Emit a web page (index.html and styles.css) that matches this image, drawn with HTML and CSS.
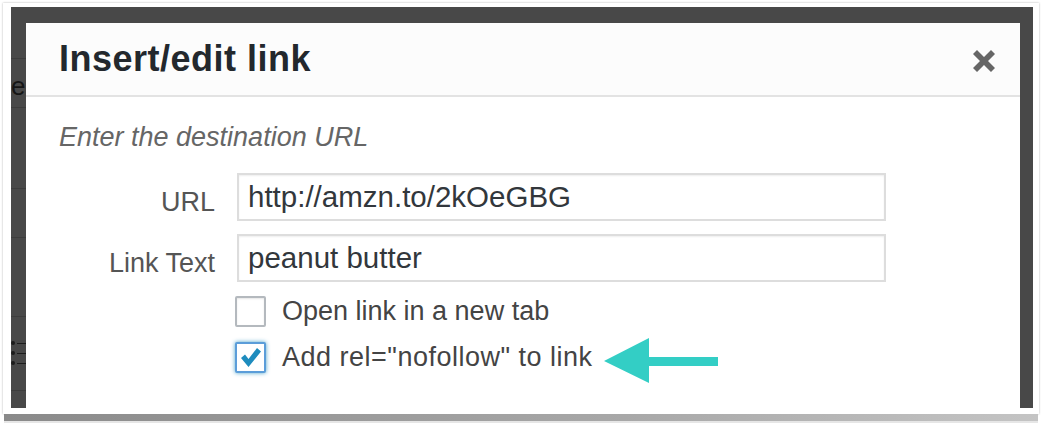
FILE: index.html
```html
<!DOCTYPE html>
<html lang="en">
<head>
  <meta charset="UTF-8" />
  <title>Insert/edit link</title>
  <link rel="stylesheet" href="styles.css">
</head>
<body>

  <div class="frame">
    <div class="screen">
      <!-- bits of the page behind the overlay -->
      <div class="under">
        <span class="rule" style="top:51px"></span>
        <span class="rule" style="top:100px"></span>
        <span class="rule" style="top:181px"></span>
        <span class="rule" style="top:230px"></span>
        <span class="rule" style="top:309px"></span>
        <span class="rule" style="top:383px"></span>
        <span class="under-letter">e</span>
        <span class="under-list">
          <i></i><i></i><i></i>
        </span>
      </div>

      <div class="dialog">
        <div class="dialog-head">
          <h1>Insert/edit link</h1>
          <button class="close" aria-label="Close">
            <svg width="22" height="22" viewBox="0 0 22 22">
              <path d="M4 0 L11 7 L18 0 L22 4 L15 11 L22 18 L18 22 L11 15 L4 22 L0 18 L7 11 L0 4 Z" fill="#666"/>
            </svg>
          </button>
        </div>

        <div class="dialog-body">
          <p class="hint">Enter the destination URL</p>

          <div class="field">
            <label for="url">URL</label>
            <input id="url" type="text" value="http://amzn.to/2kOeGBG">
          </div>
          <div class="field">
            <label for="text">Link Text</label>
            <input id="text" type="text" value="peanut butter">
          </div>

          <div class="checks">
            <div class="check">
              <span class="box"></span>
              <span>Open link in a new tab</span>
            </div>
            <div class="check">
              <span class="box on">
                <svg width="27" height="27" viewBox="0 0 27 27">
                  <path d="M4 14 L8 10.5 L11.5 15 L20 4 L24 7.5 L11.5 23 Z" fill="#1e8cbe"/>
                </svg>
              </span>
              <span class="wide">Add rel="nofollow" to link</span>
            </div>
          </div>
        </div>

        <svg class="arrow" width="115" height="46" viewBox="0 0 115 46">
          <path d="M0 23 L45 0 L45 19 L114 19 L114 28 L45 28 L45 45 Z" fill="#33cec5"/>
        </svg>
      </div>
    </div>
  </div>
  <div class="frame-shadow"></div>

</body>
</html>
```

FILE: styles.css
```css
body {
  margin: 0;
  background-color: #fff;
  font-family: 'Liberation Sans', Arial, sans-serif;
}

.frame {
  width: 1022px;
  margin: 3px 0 0 3px;
  padding: 4px 6px 6px 8px;
  background-color: #fff;
  box-shadow: 0 0 2px rgba(0,0,0,0.3);
}

/* photo-style drop shadow under the frame, darker on the left */
.frame-shadow {
  width: 1034px;
  height: 7px;
  margin-left: 4px;
  background: linear-gradient(to right, #8a8a8a, #a8a8a8 60%, #c4c4c4);
  border-bottom: 2px solid #e6e6e6;
  filter: blur(0.6px);
}

.screen {
  position: relative;
  width: 1022px;
  height: 401px;
  box-sizing: border-box;
  padding: 16px 13px 0 15px;
  background-color: #484848;
  overflow: hidden;
}

.under .rule {
  position: absolute;
  left: 0;
  width: 15px;
  height: 1px;
  background-color: #3c3c3c;
}

.under-letter {
  position: absolute;
  left: 0;
  top: 64px;
  font-size: 26px;
  color: #151515;
}

.under-list {
  position: absolute;
  left: 0;
  top: 334px;
  display: flex;
  flex-direction: column;
  gap: 6px;
}

.under-list i {
  display: block;
  position: relative;
  width: 4px;
  height: 4px;
  border-radius: 50%;
  background-color: #1c1c1c;
}

.under-list i::after {
  content: "";
  position: absolute;
  left: 6px;
  top: 1.5px;
  width: 9px;
  height: 1px;
  background-color: #1c1c1c;
}

.dialog {
  position: relative;
  height: 400px;
  background-color: #fff;
}

.dialog-head {
  display: flex;
  align-items: center;
  justify-content: space-between;
  height: 72px;
  padding: 0 25px 0 33px;
  background-color: #fcfcfc;
  border-bottom: 2px solid #e3e3e3;
}

.dialog-head h1 {
  margin: 0;
  font-size: 36px;
  font-weight: bold;
  line-height: 72px;
  letter-spacing: 0.5px;
  color: #23282d;
}

.close {
  display: flex;
  padding: 0;
  margin-top: 3px;
  border: none;
  background: none;
}

.dialog-body {
  padding: 22px 33px 0;
  font-size: 27px;
  color: #444;
}

.hint {
  margin: 0 0 18px;
  font-style: italic;
  line-height: 36px;
  color: #666;
}

.field {
  display: flex;
  align-items: center;
  gap: 22px;
  margin-bottom: 13px;
}

.field label {
  width: 156px;
  padding-top: 10px;
  text-align: right;
  color: #555;
}

.field input {
  width: 649px;
  height: 48px;
  box-sizing: border-box;
  padding: 0 9px;
  border: 2px solid #ddd;
  box-shadow: inset 0 1px 2px rgba(0,0,0,0.07);
  font-family: 'Liberation Sans', Arial, sans-serif;
  font-size: 29.5px;
  color: #32373c;
  outline: none;
}

.checks {
  display: flex;
  flex-direction: column;
  gap: 15px;
  margin-top: 14px;
  padding-left: 176px;
}

.check {
  display: flex;
  align-items: center;
  gap: 16px;
  height: 31px;
  line-height: 31px;
}

.check .wide {
  letter-spacing: 0.5px;
}

.box {
  display: flex;
  align-items: center;
  justify-content: center;
  width: 31px;
  height: 31px;
  box-sizing: border-box;
  border: 2px solid #b4b9be;
  border-radius: 2px;
  background-color: #fff;
  box-shadow: inset 0 1px 2px rgba(0,0,0,0.1);
}

.box.on {
  border-color: #5b9dd9;
  box-shadow: 0 0 4px rgba(30,140,190,0.8);
}

.arrow {
  position: absolute;
  left: 578px;
  top: 315px;
}
```
